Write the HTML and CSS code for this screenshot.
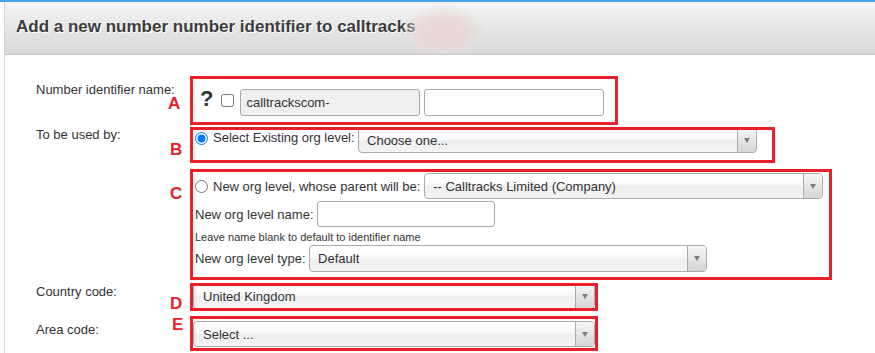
FILE: index.html
```html
<!DOCTYPE html>
<html lang="en">
<head>
<meta charset="utf-8">
<title>Add a new number identifier</title>
<link rel="stylesheet" href="styles.css">
</head>
<body>
<div class="topbar"></div>
<div class="panel">
  <div class="header">
    <h1 class="title">Add a new number number identifier to calltracks</h1>
    <span class="smudge"></span>
  </div>
  <form class="form">
    <div class="row row-a">
      <div class="label">Number identifier name:</div>
      <div class="mark">A</div>
      <div class="box box-a">
        <span class="help">?</span>
        <input type="checkbox" class="check">
        <input type="text" class="field field-ro" value="calltrackscom-" readonly>
        <input type="text" class="field field-2">
      </div>
    </div>

    <div class="row row-b">
      <div class="label">To be used by:</div>
      <div class="mark">B</div>
      <div class="box box-b">
        <input type="radio" name="use" class="radio" checked>
        <span class="opt">Select Existing org level:</span>
        <div class="select sel-b"><span class="select-text">Choose one...</span><span class="select-arrow"></span></div>
      </div>
    </div>

    <div class="row row-c">
      <div class="label"></div>
      <div class="mark">C</div>
      <div class="box box-c">
        <div class="line c1">
          <input type="radio" name="use" class="radio">
          <span class="opt">New org level, whose parent will be:</span>
          <div class="select sel-c1"><span class="select-text">-- Calltracks Limited (Company)</span><span class="select-arrow"></span></div>
        </div>
        <div class="line c2">
          <span class="opt">New org level name:</span>
          <input type="text" class="field field-name">
        </div>
        <div class="hint">Leave name blank to default to identifier name</div>
        <div class="line c4">
          <span class="opt">New org level type:</span>
          <div class="select sel-c4"><span class="select-text">Default</span><span class="select-arrow"></span></div>
        </div>
      </div>
    </div>

    <div class="row row-d">
      <div class="label">Country code:</div>
      <div class="mark">D</div>
      <div class="box box-d">
        <div class="select sel-d"><span class="select-text">United Kingdom</span><span class="select-arrow"></span></div>
      </div>
    </div>

    <div class="row row-e">
      <div class="label">Area code:</div>
      <div class="mark">E</div>
      <div class="box box-e">
        <div class="select sel-e"><span class="select-text">Select ...</span><span class="select-arrow"></span></div>
      </div>
    </div>
  </form>
</div>
</body>
</html>
```

FILE: styles.css
```css
* { box-sizing: border-box; }

body {
  margin: 0;
  font-family: "Liberation Sans", Arial, sans-serif;
  font-size: 13px;
  color: #333;
  background: #fff;
}

.topbar {
  height: 2px;
  background: #4aa3ea;
}

.panel {
  margin-left: 4px;
  border-left: 1px solid #d6d6d6;
  min-height: 351px;
}

.header {
  position: relative;
  height: 53px;
  border-top: 1px solid #f7f7f7;
  border-bottom: 1px solid #c8c8c8;
  background: linear-gradient(#f4f4f4, #d8d8d8);
  padding: 14px 0 0 11px;
}

.title {
  margin: 0;
  font-size: 17px;
  font-weight: bold;
  line-height: 20px;
  color: #3c3c3c;
  text-shadow: 1px 1px 0 #fff;
}

.smudge {
  position: absolute;
  left: 397px;
  top: 3px;
  width: 84px;
  height: 50px;
  border-radius: 50%;
  background: radial-gradient(ellipse at center, rgba(232, 214, 214, 0.95) 0%, rgba(232, 212, 212, 0.8) 35%, rgba(235, 218, 218, 0.35) 60%, rgba(235, 220, 220, 0) 75%);
}

.form {
  margin: 0;
  padding: 24px 0 0 31px;
}

.row {
  display: flex;
  align-items: flex-start;
}
.row-a { height: 43px; }
.row-b { height: 30px; margin-top: 8px; }
.row-c { height: 105px; margin-top: 12px; }
.row-d { height: 22px; margin-top: 9px; }
.row-e { height: 29px; margin-top: 11px; }

.label {
  width: 130px;
  flex: none;
  line-height: 15px;
  white-space: nowrap;
}
.row-a .label { margin-top: 3px; }
.row-b .label { margin-top: -3px; }
.row-d .label { margin-top: -2px; }
.row-e .label { margin-top: 3px; }

.mark {
  width: 27px;
  flex: none;
  color: #e8202a;
  font-weight: bold;
  font-size: 17px;
  line-height: 19px;
  padding-left: 2px;
}
.row-a .mark { margin-top: 15px; }
.row-b .mark { margin-top: 10px; padding-left: 4px; }
.row-c .mark { margin-top: 12px; padding-left: 4px; }
.row-d .mark { margin-top: 8px; padding-left: 4px; }
.row-e .mark { margin-top: -4px; padding-left: 6px; }

.box {
  flex: none;
  outline: 3px solid #e8202a;
}

.box-a {
  width: 422px;
  height: 43px;
  display: flex;
  align-items: flex-start;
  padding-left: 7px;
}

.help {
  font-size: 22px;
  font-weight: bold;
  line-height: 25px;
  margin-top: 7px;
  color: #333;
}

.check {
  width: 13px;
  height: 13px;
  margin: 15px 0 0 8px;
  flex: none;
}

.field {
  font-family: "Liberation Sans", Arial, sans-serif;
  font-size: 13px;
  color: #333;
  width: 180px;
  height: 27px;
  border: 1px solid #aaa;
  border-radius: 3px;
  padding: 0 5px;
  background: #fff;
  flex: none;
  outline: none;
}
.field-ro {
  background: #efefef;
  margin: 10px 0 0 6px;
}
.field-2 {
  margin: 10px 0 0 4px;
}
.field-name {
  width: 178px;
  height: 26px;
  margin-left: 3.5px;
}

.radio {
  width: 13px;
  height: 13px;
  margin: 0 5px 0 0;
  flex: none;
}

.opt {
  line-height: 15px;
  white-space: nowrap;
}

.box-b {
  width: 579px;
  height: 30px;
  display: flex;
  align-items: flex-start;
  padding-left: 2px;
}
.box-b .radio { margin-top: 2px; }

.select {
  display: flex;
  align-items: center;
  height: 26px;
  border: 1px solid #aaa;
  border-radius: 4px;
  background: linear-gradient(#fff 20%, #f6f6f6 50%, #eee 52%, #f4f4f4 100%);
  color: #333;
  flex: none;
  overflow: hidden;
}
.select-text {
  flex: 1;
  padding-left: 8px;
  white-space: nowrap;
}
.select-arrow {
  width: 19px;
  align-self: stretch;
  border-left: 1px solid #aaa;
  background: linear-gradient(#f6f6f6, #d5d5d5);
  display: flex;
  align-items: center;
  justify-content: center;
}
.select-arrow::before {
  content: "";
  border-left: 3px solid transparent;
  border-right: 3px solid transparent;
  border-top: 5px solid #7d7d7d;
}

.sel-b {
  width: 399px;
  margin: -3px 0 0 3.4px;
}

.box-c {
  width: 636px;
  height: 105px;
  padding: 1px 0 0 2px;
}
.line {
  display: flex;
  align-items: center;
}
.c1 { height: 26px; }
.c2 { height: 26px; margin-top: 2px; }
.hint {
  margin-top: 4px;
  font-size: 11px;
  line-height: 13px;
}
.c4 { height: 27px; margin-top: 1px; }

.sel-c1 {
  width: 399px;
  margin-left: 3.8px;
}
.sel-c4 {
  width: 398px;
  height: 27px;
  margin-left: 3.5px;
}

.box-d {
  width: 402px;
  height: 22px;
}
.sel-d {
  width: 402px;
  margin-top: -3px;
}
.box-e {
  width: 402px;
  height: 29px;
}
.sel-e {
  width: 402px;
  margin-top: 2px;
}
.sel-d .select-text,
.sel-e .select-text { padding-left: 9px; }
```
